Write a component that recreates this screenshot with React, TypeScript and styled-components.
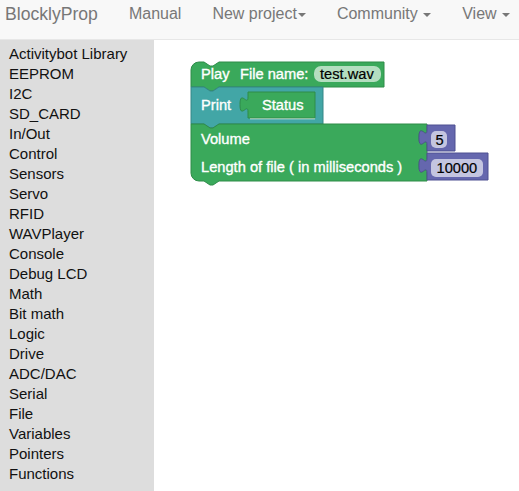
import React from "react";
import styled, { createGlobalStyle } from "styled-components";

const GlobalStyle = createGlobalStyle`
  html, body {
    margin: 0;
    padding: 0;
    background: #ffffff;
    font-family: "Liberation Sans", Arial, Helvetica, sans-serif;
  }
  * { box-sizing: border-box; }
`;

const Page = styled.div`
  width: 519px;
  height: 491px;
  display: flex;
  flex-direction: column;
  overflow: hidden;
`;

const NavBar = styled.nav`
  height: 40px;
  flex: none;
  display: flex;
  align-items: flex-start;
  gap: 31px;
  padding: 4px 0 0 5px;
  background: #f8f8f8;
  border-bottom: 1px solid #e7e7e7;
  color: #777777;
  white-space: nowrap;
`;

const Brand = styled.span`
  font-size: 17.6px;
  line-height: 20px;
`;

const NavLink = styled.span`
  font-size: 16px;
  line-height: 20px;
`;

const Caret = styled.span<{ $gap?: number }>`
  display: inline-block;
  width: 0;
  height: 0;
  margin-left: ${(p) => p.$gap ?? 1}px;
  vertical-align: middle;
  border-top: 4px solid #777777;
  border-left: 4px solid transparent;
  border-right: 4px solid transparent;
`;

const Main = styled.div`
  flex: 1;
  display: flex;
  min-height: 0;
`;

const Sidebar = styled.ul`
  width: 154px;
  flex: none;
  margin: 0;
  padding: 4px 0 0 9px;
  list-style: none;
  background: #dddddd;
`;

const Category = styled.li`
  font-size: 15px;
  line-height: 20px;
  color: #111111;
`;

const Workspace = styled.div`
  flex: 1;
  position: relative;
  background: #ffffff;
`;

const BlockCanvas = styled.svg`
  position: absolute;
  left: 0;
  top: 0;
  width: 365px;
  height: 451px;
  overflow: visible;
`;

const BlockShape = styled.path<{ $fill: string; $edge: string }>`
  fill: ${(p) => p.$fill};
  stroke: ${(p) => p.$edge};
  stroke-width: 1;
`;

const FieldBox = styled.rect`
  fill: rgba(255, 255, 255, 0.62);
`;

const BlockLabel = styled.text`
  font-family: "Liberation Sans", Arial, Helvetica, sans-serif;
  font-size: 14.67px;
  fill: #ffffff;
  stroke: #ffffff;
  stroke-width: 0.35px;
`;

const FieldLabel = styled(BlockLabel)`
  fill: #000000;
  stroke: #000000;
  stroke-width: 0.2px;
`;

const HoleHighlight = styled.line`
  stroke: #eef7f7;
  stroke-width: 1.5;
`;

const GREEN = "#3aa95b";
const GREEN_EDGE = "#2e8c49";
const TEAL = "#42a6a6";
const TEAL_EDGE = "#348686";
const PURPLE = "#6567ae";
const PURPLE_EDGE = "#4e5191";

const categories = [
  "Activitybot Library",
  "EEPROM",
  "I2C",
  "SD_CARD",
  "In/Out",
  "Control",
  "Sensors",
  "Servo",
  "RFID",
  "WAVPlayer",
  "Console",
  "Debug LCD",
  "Math",
  "Bit math",
  "Logic",
  "Drive",
  "ADC/DAC",
  "Serial",
  "File",
  "Variables",
  "Pointers",
  "Functions",
];

const TAB_DOWN = "c0,10 -8,-8 -8,7.5 s8,-2.5 8,7.5";
const TAB_UP = "c0,-10 -8,8 -8,-7.5 s8,2.5 8,-7.5";

const outputBlock = (x: number, y: number, w: number, h: number) =>
  `M${x},${y} H${x + w} V${y + h} H${x} V${y + 20} ${TAB_UP} Z`;

export default function App() {
  return (
    <>
      <GlobalStyle />
      <Page>
        <NavBar>
          <Brand>BlocklyProp</Brand>
          <NavLink>Manual</NavLink>
          <NavLink>
            New project
            <Caret $gap={1} />
          </NavLink>
          <NavLink>
            Community <Caret $gap={1} />
          </NavLink>
          <NavLink>
            View <Caret $gap={1} />
          </NavLink>
        </NavBar>
        <Main>
          <Sidebar>
            {categories.map((c) => (
              <Category key={c}>{c}</Category>
            ))}
          </Sidebar>
          <Workspace>
            <BlockCanvas viewBox="0 0 365 451">
              <g transform="translate(-154 -40)">
                {/* Play block */}
                <BlockShape
                  $fill={GREEN}
                  $edge={GREEN_EDGE}
                  d="M191,70 A8,8 0 0 1 199,62 H204 l6,4 3,0 6,-4 H384 V87 H219 l-6,4 -3,0 -6,-4 H191 Z"
                />
                <BlockLabel x={201} y={79}>Play</BlockLabel>
                <BlockLabel x={240} y={79}>File name:</BlockLabel>
                <FieldBox x={314} y={66} width={67} height={16} rx={7} />
                <FieldLabel x={320} y={79}>test.wav</FieldLabel>

                {/* Print block */}
                <BlockShape
                  $fill={TEAL}
                  $edge={TEAL_EDGE}
                  d="M191,87 H204 l6,4 3,0 6,-4 H323 V124 H219 l-6,4 -3,0 -6,-4 H191 Z"
                />
                <BlockLabel x={201} y={110}>Print</BlockLabel>
                <HoleHighlight x1={250} y1={118.5} x2={315} y2={118.5} />
                <BlockShape $fill={GREEN} $edge={GREEN_EDGE} d={outputBlock(248, 92, 67, 26)} />
                <BlockLabel x={262} y={110}>Status</BlockLabel>

                {/* Sound block */}
                <BlockShape
                  $fill={GREEN}
                  $edge={GREEN_EDGE}
                  d={`M191,124 H204 l6,4 3,0 6,-4 H427 V130 ${TAB_DOWN} V158 ${TAB_DOWN} V181 H219 l-6,4 -3,0 -6,-4 H199 A8,8 0 0 1 191,173 Z`}
                />
                <BlockLabel x={201} y={144}>Volume</BlockLabel>
                <BlockLabel x={201} y={172}>Length of file ( in milliseconds )</BlockLabel>

                {/* Number blocks */}
                <BlockShape $fill={PURPLE} $edge={PURPLE_EDGE} d={outputBlock(427, 125, 28, 26)} />
                <FieldBox x={431} y={131} width={16} height={17} rx={5} />
                <FieldLabel x={435.5} y={144.5}>5</FieldLabel>

                <BlockShape $fill={PURPLE} $edge={PURPLE_EDGE} d={outputBlock(427, 153, 61, 27)} />
                <FieldBox x={431} y={159} width={52} height={18} rx={5} />
                <FieldLabel x={436.5} y={173}>10000</FieldLabel>
              </g>
            </BlockCanvas>
          </Workspace>
        </Main>
      </Page>
    </>
  );
}
